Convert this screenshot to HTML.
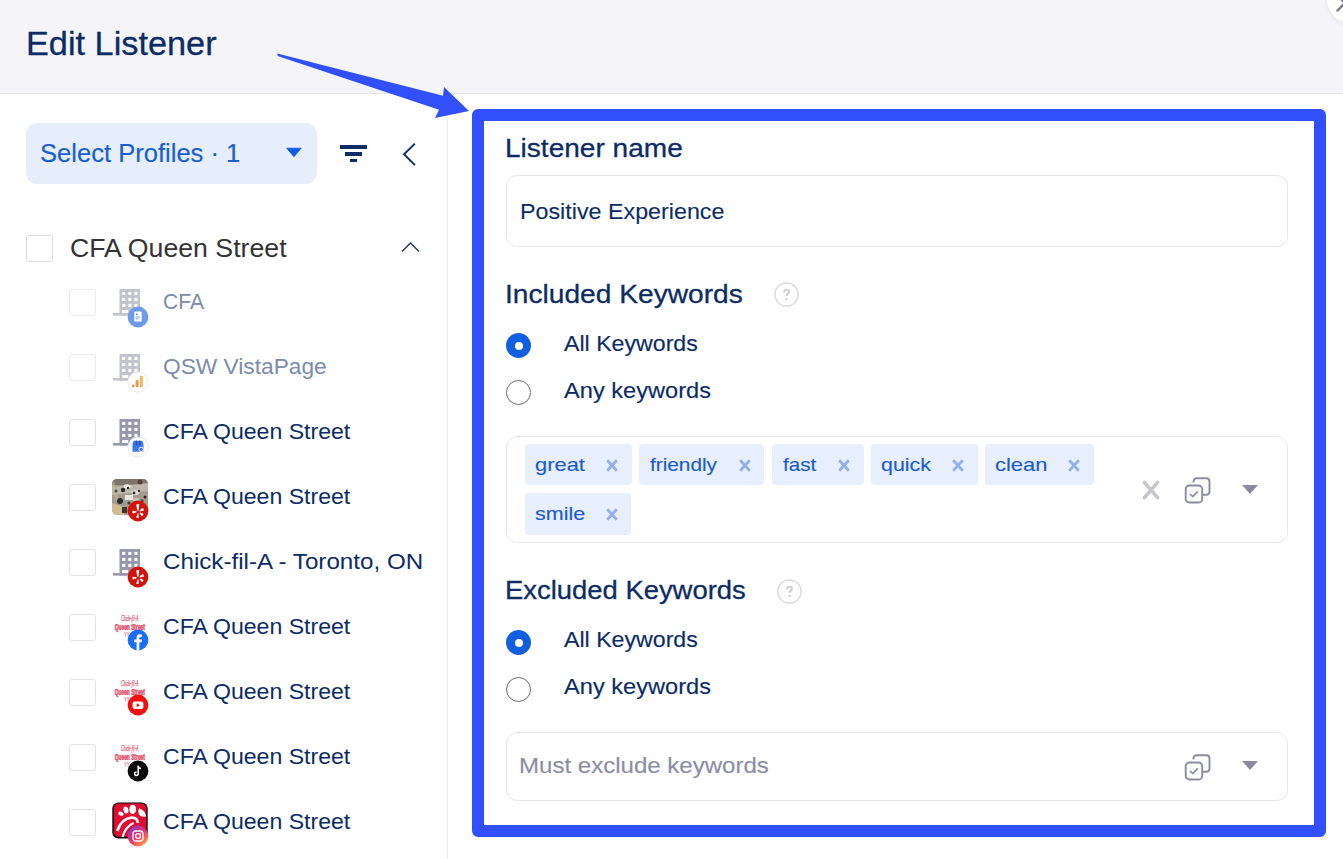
<!DOCTYPE html><html><head><meta charset="utf-8"><title>Edit Listener</title><style>
*{margin:0;padding:0;box-sizing:border-box}
html,body{width:1343px;height:859px;overflow:hidden;background:#fff;font-family:"Liberation Sans",sans-serif}
.t{position:absolute;white-space:nowrap;transform-origin:0 0;font-weight:400}
.ic{position:absolute;display:block}
.abs{position:absolute}
</style></head><body>
<div class="abs" style="left:0;top:0;width:1343px;height:93px;background:#f4f4f9"></div>
<div class="abs" style="left:0;top:93px;width:1343px;height:1px;background:#e6e6ec"></div>
<div class="abs" style="left:1327px;top:-25px;width:48px;height:48px;border-radius:50%;background:#fff;box-shadow:0 1px 8px rgba(30,30,60,0.07)"></div>
<svg class="ic" style="left:1330px;top:0" width="13" height="16" viewBox="0 0 13 16"><path d="M7.4 10.6 L15 3 M11 -1 L15 3" stroke="#7b7b8c" stroke-width="2.3" stroke-linecap="round" fill="none"/></svg>
<div class="abs" style="left:447px;top:94px;width:1px;height:765px;background:#ebebf0"></div>
<div class="abs" style="left:26px;top:123px;width:291px;height:61px;border-radius:11px;background:#e6eefb"></div>
<svg class="ic" style="left:285px;top:147px" width="18" height="11" viewBox="0 0 18 11"><path d="M1.6 1.2 H16.2 L9 9.7Z" fill="#0d5de4" stroke="#0d5de4" stroke-width="0.8" stroke-linejoin="round"/></svg>
<div class="abs" style="left:339.7px;top:145px;width:27.5px;height:3.8px;background:#0c2c66"></div>
<div class="abs" style="left:344.9px;top:152px;width:17px;height:3.5px;background:#0c2c66"></div>
<div class="abs" style="left:350px;top:159px;width:7px;height:3.3px;background:#0c2c66"></div>
<svg class="ic" style="left:398px;top:138px" width="24" height="32" viewBox="0 0 24 32"><path d="M16.9 5.6 L6 16.2 L16.9 27.2" fill="none" stroke="#0c2c66" stroke-width="1.9"/></svg>
<div class="abs" style="left:26px;top:235px;width:27px;height:27px;border:1px solid #dddde2;border-radius:3px"></div>
<svg class="ic" style="left:398px;top:236px" width="26" height="20" viewBox="0 0 26 20"><path d="M4 15.6 L12.5 7.1 L21 15.6" fill="none" stroke="#24375c" stroke-width="1.45"/></svg>
<div class="abs" style="left:69px;top:289px;width:27px;height:27px;border:1px solid #ececef;border-radius:3px"></div>
<svg class="ic" style="left:113px;top:289px" width="30" height="30" viewBox="0 0 30 30"><rect x="6.5" y="0" width="20.5" height="26.5" fill="#c3c3cd"/><rect x="0" y="24" width="14" height="2.6" fill="#c3c3cd"/><rect x="9.2" y="2.9" width="3.1" height="3.1" fill="#fff"/><rect x="15.3" y="2.9" width="3.1" height="3.1" fill="#fff"/><rect x="21.4" y="2.9" width="3.1" height="3.1" fill="#fff"/><rect x="9.2" y="8.9" width="3.1" height="3.1" fill="#fff"/><rect x="15.3" y="8.9" width="3.1" height="3.1" fill="#fff"/><rect x="21.4" y="8.9" width="3.1" height="3.1" fill="#fff"/><rect x="9.2" y="14.9" width="3.1" height="3.1" fill="#fff"/><rect x="15.3" y="14.9" width="3.1" height="3.1" fill="#fff"/><rect x="21.4" y="14.9" width="3.1" height="3.1" fill="#fff"/><rect x="9.2" y="21" width="6" height="3" fill="#fff"/></svg>
<svg class="ic" style="left:126.5px;top:305.9px" width="22" height="22" viewBox="0 0 22 22"><circle cx="11" cy="11" r="10.4" fill="#6c9ce9"/><rect x="7.3" y="5.6" width="7.4" height="10" rx="1.2" fill="#fff"/><circle cx="9.8" cy="8.2" r="1" fill="#6c9ce9"/><rect x="8.6" y="10.6" width="4.6" height="0.9" fill="#6c9ce9"/><rect x="8.6" y="12.4" width="3" height="0.9" fill="#6c9ce9"/></svg>
<div class="abs" style="left:69px;top:354px;width:27px;height:27px;border:1px solid #ececef;border-radius:3px"></div>
<svg class="ic" style="left:113px;top:354px" width="30" height="30" viewBox="0 0 30 30"><rect x="6.5" y="0" width="20.5" height="26.5" fill="#c3c3cd"/><rect x="0" y="24" width="14" height="2.6" fill="#c3c3cd"/><rect x="9.2" y="2.9" width="3.1" height="3.1" fill="#fff"/><rect x="15.3" y="2.9" width="3.1" height="3.1" fill="#fff"/><rect x="21.4" y="2.9" width="3.1" height="3.1" fill="#fff"/><rect x="9.2" y="8.9" width="3.1" height="3.1" fill="#fff"/><rect x="15.3" y="8.9" width="3.1" height="3.1" fill="#fff"/><rect x="21.4" y="8.9" width="3.1" height="3.1" fill="#fff"/><rect x="9.2" y="14.9" width="3.1" height="3.1" fill="#fff"/><rect x="15.3" y="14.9" width="3.1" height="3.1" fill="#fff"/><rect x="21.4" y="14.9" width="3.1" height="3.1" fill="#fff"/><rect x="9.2" y="21" width="6" height="3" fill="#fff"/></svg>
<svg class="ic" style="left:126.5px;top:370.9px" width="22" height="22" viewBox="0 0 22 22"><circle cx="11" cy="11" r="10.1" fill="#fff" stroke="#e4e4ea" stroke-width="0.8"/><rect x="12.7" y="4.7" width="3.2" height="11.5" rx="1.2" fill="#f4b860"/><rect x="8.6" y="9" width="3" height="7.2" rx="1.1" fill="#e39a52"/><circle cx="6.2" cy="15" r="1.4" fill="#e39a52"/></svg>
<div class="abs" style="left:69px;top:419px;width:27px;height:27px;border:1px solid #e2e2e6;border-radius:3px"></div>
<svg class="ic" style="left:113px;top:419px" width="30" height="30" viewBox="0 0 30 30"><rect x="6.5" y="0" width="20.5" height="26.5" fill="#9798ab"/><rect x="0" y="24" width="14" height="2.6" fill="#9798ab"/><rect x="9.2" y="2.9" width="3.1" height="3.1" fill="#fff"/><rect x="15.3" y="2.9" width="3.1" height="3.1" fill="#fff"/><rect x="21.4" y="2.9" width="3.1" height="3.1" fill="#fff"/><rect x="9.2" y="8.9" width="3.1" height="3.1" fill="#fff"/><rect x="15.3" y="8.9" width="3.1" height="3.1" fill="#fff"/><rect x="21.4" y="8.9" width="3.1" height="3.1" fill="#fff"/><rect x="9.2" y="14.9" width="3.1" height="3.1" fill="#fff"/><rect x="15.3" y="14.9" width="3.1" height="3.1" fill="#fff"/><rect x="21.4" y="14.9" width="3.1" height="3.1" fill="#fff"/><rect x="9.2" y="21" width="6" height="3" fill="#fff"/></svg>
<svg class="ic" style="left:126.5px;top:435.9px" width="22" height="22" viewBox="0 0 22 22"><circle cx="11" cy="11" r="10.1" fill="#fff" stroke="#e0dde8" stroke-width="0.8"/><path d="M5.5 8.6 L6.6 4.8 H15.4 L16.5 8.6 V15.8 H5.5 Z" fill="#3b78e7"/><path d="M8.6 4.8 h1.6 v4.2 h-1.6z M11.8 4.8 h1.6 v4.2 h-1.6z" fill="#1f4fb8"/><circle cx="14.2" cy="13.4" r="2.2" fill="none" stroke="#fff" stroke-width="0.9"/></svg>
<div class="abs" style="left:69px;top:484px;width:27px;height:27px;border:1px solid #e2e2e6;border-radius:3px"></div>
<svg class="ic" style="left:112px;top:479px" width="36" height="36" viewBox="0 0 36 36"><defs><clipPath id="phc"><rect x="0" y="0" width="36" height="36" rx="5"/></clipPath></defs><g clip-path="url(#phc)"><rect width="36" height="36" fill="#a49b8e"/><rect x="0" y="0" width="36" height="6" fill="#7d756b"/><path d="M0 8 L36 4 V12 L0 16Z" fill="#bdb6aa"/><path d="M12 6 q4 -2 8 1 q-3 4 -8 2z" fill="#f0eee8"/><path d="M19 12 q5 -2 9 1 q-2 4 -8 3z" fill="#e2ded6"/><circle cx="11" cy="11" r="2.2" fill="#2a2724"/><circle cx="16" cy="9" r="1.2" fill="#2a2724"/><circle cx="22" cy="14" r="1.4" fill="#2d2b28"/><circle cx="27" cy="12" r="1.2" fill="#3a3632"/><circle cx="8" cy="22" r="3" fill="#23302a"/><path d="M0 24 L12 28 V36 H0Z" fill="#d1bb90"/><path d="M2 2 L6 20 L4 22 L0 6Z" fill="#c9b58e" opacity="0.7"/><circle cx="28" cy="3" r="2.5" fill="#5b3e36"/><circle cx="4" cy="12" r="1.5" fill="#4a4640"/><rect x="13" y="16" width="8" height="5" fill="#e8e6df"/><rect x="21" y="19" width="6" height="3" fill="#c6c1b6"/><circle cx="17" cy="24" r="1.6" fill="#3a3935"/><circle cx="30" cy="22" r="1.8" fill="#53504a"/><rect x="10" y="28" width="5" height="6" fill="#39372f"/><circle cx="33" cy="18" r="1.5" fill="#2b2a27"/></g></svg>
<svg class="ic" style="left:126.5px;top:500.1px" width="22" height="22" viewBox="0 0 22 22"><circle cx="11" cy="11" r="10.4" fill="#d1130b"/><g fill="#fff"><path d="M9.2 4.6 Q10.6 3.4 12.2 4.2 L11.6 10.4 Q10.9 11.2 10.3 10.5 Z"/><path d="M12.6 10.2 L15.6 8.0 Q16.9 8.6 16.8 10.4 L13.2 11.6 Q12.3 11.2 12.6 10.2Z"/><path d="M13.2 12.6 L16.4 13.8 Q16.4 15.6 15.0 16.2 L12.6 13.4 Q12.7 12.6 13.2 12.6Z"/><path d="M11.4 13.6 L11.8 17.4 Q10.6 18.4 9.2 17.6 L10.6 13.4 Q11.2 13.1 11.4 13.6Z"/><path d="M9.6 12.2 L5.9 13.6 Q5.0 12.2 5.6 10.8 L9.4 11.2 Q9.9 11.7 9.6 12.2Z"/></g></svg>
<div class="abs" style="left:69px;top:549px;width:27px;height:27px;border:1px solid #e2e2e6;border-radius:3px"></div>
<svg class="ic" style="left:113px;top:549px" width="30" height="30" viewBox="0 0 30 30"><rect x="6.5" y="0" width="20.5" height="26.5" fill="#9798ab"/><rect x="0" y="24" width="14" height="2.6" fill="#9798ab"/><rect x="9.2" y="2.9" width="3.1" height="3.1" fill="#fff"/><rect x="15.3" y="2.9" width="3.1" height="3.1" fill="#fff"/><rect x="21.4" y="2.9" width="3.1" height="3.1" fill="#fff"/><rect x="9.2" y="8.9" width="3.1" height="3.1" fill="#fff"/><rect x="15.3" y="8.9" width="3.1" height="3.1" fill="#fff"/><rect x="21.4" y="8.9" width="3.1" height="3.1" fill="#fff"/><rect x="9.2" y="14.9" width="3.1" height="3.1" fill="#fff"/><rect x="15.3" y="14.9" width="3.1" height="3.1" fill="#fff"/><rect x="21.4" y="14.9" width="3.1" height="3.1" fill="#fff"/><rect x="9.2" y="21" width="6" height="3" fill="#fff"/></svg>
<svg class="ic" style="left:126.5px;top:565.9px" width="22" height="22" viewBox="0 0 22 22"><circle cx="11" cy="11" r="10.4" fill="#d1130b"/><g fill="#fff"><path d="M9.2 4.6 Q10.6 3.4 12.2 4.2 L11.6 10.4 Q10.9 11.2 10.3 10.5 Z"/><path d="M12.6 10.2 L15.6 8.0 Q16.9 8.6 16.8 10.4 L13.2 11.6 Q12.3 11.2 12.6 10.2Z"/><path d="M13.2 12.6 L16.4 13.8 Q16.4 15.6 15.0 16.2 L12.6 13.4 Q12.7 12.6 13.2 12.6Z"/><path d="M11.4 13.6 L11.8 17.4 Q10.6 18.4 9.2 17.6 L10.6 13.4 Q11.2 13.1 11.4 13.6Z"/><path d="M9.6 12.2 L5.9 13.6 Q5.0 12.2 5.6 10.8 L9.4 11.2 Q9.9 11.7 9.6 12.2Z"/></g></svg>
<div class="abs" style="left:69px;top:614px;width:27px;height:27px;border:1px solid #e2e2e6;border-radius:3px"></div>
<svg class="ic" style="left:110px;top:607px" width="40" height="36" viewBox="0 0 40 36"><text x="10.9" y="14.2" font-family="Liberation Serif" font-style="italic" font-size="9" textLength="17.5" lengthAdjust="spacingAndGlyphs" fill="#d9506c" stroke="#d9506c" stroke-width="0.25">Chick-fil-A</text><text x="4.7" y="22.8" font-family="Liberation Sans" font-weight="bold" font-size="8.6" textLength="30.2" lengthAdjust="spacingAndGlyphs" fill="#d83a58" stroke="#e06079" stroke-width="0.6">Queen Street</text><text x="14" y="29.6" font-family="Liberation Sans" font-weight="bold" font-size="7" textLength="5.6" lengthAdjust="spacingAndGlyphs" fill="#e88aa0">YY</text></svg>
<svg class="ic" style="left:126.5px;top:629.4px" width="22" height="22" viewBox="0 0 22 22"><circle cx="11" cy="11" r="10.4" fill="#1a6ef5"/><path d="M12.3 21.4 V13.3 H14.6 L15 10.6 H12.3 V9 Q12.3 7.9 13.5 7.9 H15.1 V5.5 Q14 5.3 12.9 5.3 Q9.6 5.3 9.6 8.7 V10.6 H7.3 V13.3 H9.6 V21.4 Z" fill="#fff"/></svg>
<div class="abs" style="left:69px;top:679px;width:27px;height:27px;border:1px solid #e2e2e6;border-radius:3px"></div>
<svg class="ic" style="left:110px;top:672px" width="40" height="36" viewBox="0 0 40 36"><text x="10.9" y="14.2" font-family="Liberation Serif" font-style="italic" font-size="9" textLength="17.5" lengthAdjust="spacingAndGlyphs" fill="#d9506c" stroke="#d9506c" stroke-width="0.25">Chick-fil-A</text><text x="4.7" y="22.8" font-family="Liberation Sans" font-weight="bold" font-size="8.6" textLength="30.2" lengthAdjust="spacingAndGlyphs" fill="#d83a58" stroke="#e06079" stroke-width="0.6">Queen Street</text><text x="14" y="29.6" font-family="Liberation Sans" font-weight="bold" font-size="7" textLength="5.6" lengthAdjust="spacingAndGlyphs" fill="#e88aa0">YY</text></svg>
<svg class="ic" style="left:126.5px;top:694.2px" width="22" height="22" viewBox="0 0 22 22"><circle cx="11" cy="11" r="10.4" fill="#f40f0f"/><rect x="5.6" y="7.4" width="10.8" height="7.6" rx="2" fill="#fff"/><path d="M9.7 9.2 L13 11.2 L9.7 13.2 Z" fill="#f40f0f"/></svg>
<div class="abs" style="left:69px;top:744px;width:27px;height:27px;border:1px solid #e2e2e6;border-radius:3px"></div>
<svg class="ic" style="left:110px;top:737px" width="40" height="36" viewBox="0 0 40 36"><text x="10.9" y="14.2" font-family="Liberation Serif" font-style="italic" font-size="9" textLength="17.5" lengthAdjust="spacingAndGlyphs" fill="#d9506c" stroke="#d9506c" stroke-width="0.25">Chick-fil-A</text><text x="4.7" y="22.8" font-family="Liberation Sans" font-weight="bold" font-size="8.6" textLength="30.2" lengthAdjust="spacingAndGlyphs" fill="#d83a58" stroke="#e06079" stroke-width="0.6">Queen Street</text><text x="14" y="29.6" font-family="Liberation Sans" font-weight="bold" font-size="7" textLength="5.6" lengthAdjust="spacingAndGlyphs" fill="#e88aa0">YY</text></svg>
<svg class="ic" style="left:126.5px;top:759.7px" width="22" height="22" viewBox="0 0 22 22"><circle cx="11" cy="11" r="10.4" fill="#0a0a0a"/><path d="M11.2 5.8 V13.6 Q11.2 15.6 9.4 15.6 Q7.6 15.6 7.6 13.8 Q7.6 12 9.6 12" fill="none" stroke="#fff" stroke-width="1.5"/><path d="M11.2 5.8 Q11.6 8.2 14 8.4" fill="none" stroke="#fff" stroke-width="1.5"/></svg>
<div class="abs" style="left:69px;top:809px;width:27px;height:27px;border:1px solid #e2e2e6;border-radius:3px"></div>
<svg class="ic" style="left:112px;top:802.4px" width="36" height="37" viewBox="0 0 36 37"><rect x="0.3" y="0.5" width="35.4" height="36" rx="6" fill="#0a0a0a"/><rect x="1.8" y="1.6" width="32.6" height="33.2" rx="5" fill="#e10a30"/><g fill="#fff"><ellipse cx="8.9" cy="11.8" rx="2.8" ry="2" transform="rotate(25 8.9 11.8)"/><ellipse cx="13.9" cy="8" rx="2.5" ry="3.6" transform="rotate(-12 13.9 8)"/><ellipse cx="20.7" cy="7.3" rx="3.3" ry="4.6"/><path d="M27 6.2 Q33.6 8.6 34 14.6 Q29 15.4 26.8 12.4 Q25.4 9.6 27 6.2Z"/></g><path d="M5.2 29 Q9.5 16.5 19.5 15.6 Q25.6 15.4 25.8 21" fill="none" stroke="#fff" stroke-width="2.6"/><path d="M10.6 35 Q13.5 24.5 21.5 21" fill="none" stroke="#fff" stroke-width="2.2"/></svg>
<svg class="ic" style="left:126.5px;top:824.6px" width="22" height="22" viewBox="0 0 22 22"><defs><linearGradient id="igg" x1="0.1" y1="0" x2="0.9" y2="1"><stop offset="0" stop-color="#7b3fd6"/><stop offset="0.5" stop-color="#e8306a"/><stop offset="1" stop-color="#ffb33c"/></linearGradient></defs><circle cx="11" cy="11" r="10.4" fill="url(#igg)"/><rect x="6" y="6" width="10" height="10" rx="2.8" fill="none" stroke="#fff" stroke-width="1.3"/><circle cx="11" cy="11" r="2.4" fill="none" stroke="#fff" stroke-width="1.3"/><circle cx="13.9" cy="8.1" r="0.6" fill="#fff"/></svg>
<div class="abs" style="left:472px;top:109px;width:854px;height:728px;border:12px solid #3150fb;border-radius:6px"></div>
<svg class="ic" style="left:0;top:0" width="480" height="130" viewBox="0 0 480 130"><path d="M277.3 53.6 L443 95.8 L444 87 L469 111 L435 118 L439 109.8 L277.6 55.9 Z" fill="#3150fb"/></svg>
<div class="abs" style="left:506px;top:175px;width:782px;height:72px;border:1px solid #e6e6eb;border-radius:11px"></div>
<svg class="ic" style="left:774.2px;top:281.9px" width="25" height="25" viewBox="0 0 25 25"><circle cx="12.5" cy="12.5" r="11.6" fill="none" stroke="#d9d9df" stroke-width="1.5"/><path d="M10.1 10.6 Q10.1 7.6 12.6 7.6 Q15 7.6 15 9.9 Q15 11.4 12.7 12.6 V14" fill="none" stroke="#cbcbd3" stroke-width="1.9"/><circle cx="12.6" cy="16.9" r="1.1" fill="#cbcbd3"/></svg>
<svg class="ic" style="left:776.9px;top:578.8px" width="25" height="25" viewBox="0 0 25 25"><circle cx="12.5" cy="12.5" r="11.6" fill="none" stroke="#d9d9df" stroke-width="1.5"/><path d="M10.1 10.6 Q10.1 7.6 12.6 7.6 Q15 7.6 15 9.9 Q15 11.4 12.7 12.6 V14" fill="none" stroke="#cbcbd3" stroke-width="1.9"/><circle cx="12.6" cy="16.9" r="1.1" fill="#cbcbd3"/></svg>
<div class="abs" style="left:506.1px;top:333.4px;width:25px;height:25px;border-radius:50%;background:#0f5fe0"></div>
<div class="abs" style="left:514.6px;top:342.0px;width:8px;height:8px;border-radius:50%;background:#fff"></div>
<div class="abs" style="left:506.1px;top:380.0px;width:25px;height:25px;border-radius:50%;border:1.2px solid #6c6c78"></div>
<div class="abs" style="left:506.1px;top:630.2px;width:25px;height:25px;border-radius:50%;background:#0f5fe0"></div>
<div class="abs" style="left:514.6px;top:638.8px;width:8px;height:8px;border-radius:50%;background:#fff"></div>
<div class="abs" style="left:506.1px;top:676.8px;width:25px;height:25px;border-radius:50%;border:1.2px solid #6c6c78"></div>
<div class="abs" style="left:506px;top:436px;width:782px;height:107px;border:1px solid #e6e6eb;border-radius:11px"></div>
<div class="abs" style="left:525.3px;top:444.1px;width:106.6px;height:41.4px;border-radius:4px;background:#e8effc"></div>
<svg class="ic" style="left:605.1px;top:458.1px" width="14" height="15" viewBox="0 0 14 15"><path d="M2.2 2.2 L11.8 12.8 M11.8 2.2 L2.2 12.8" stroke="#94b0ea" stroke-width="2.8" fill="none"/></svg>
<div class="abs" style="left:639.3px;top:444.1px;width:124.4px;height:41.4px;border-radius:4px;background:#e8effc"></div>
<svg class="ic" style="left:737.9px;top:458.1px" width="14" height="15" viewBox="0 0 14 15"><path d="M2.2 2.2 L11.8 12.8 M11.8 2.2 L2.2 12.8" stroke="#94b0ea" stroke-width="2.8" fill="none"/></svg>
<div class="abs" style="left:772.0px;top:444.1px;width:91.6px;height:41.4px;border-radius:4px;background:#e8effc"></div>
<svg class="ic" style="left:836.6px;top:458.1px" width="14" height="15" viewBox="0 0 14 15"><path d="M2.2 2.2 L11.8 12.8 M11.8 2.2 L2.2 12.8" stroke="#94b0ea" stroke-width="2.8" fill="none"/></svg>
<div class="abs" style="left:871.2px;top:444.1px;width:106.4px;height:41.4px;border-radius:4px;background:#e8effc"></div>
<svg class="ic" style="left:950.8px;top:458.1px" width="14" height="15" viewBox="0 0 14 15"><path d="M2.2 2.2 L11.8 12.8 M11.8 2.2 L2.2 12.8" stroke="#94b0ea" stroke-width="2.8" fill="none"/></svg>
<div class="abs" style="left:985.3px;top:444.1px;width:108.3px;height:41.4px;border-radius:4px;background:#e8effc"></div>
<svg class="ic" style="left:1066.6px;top:458.1px" width="14" height="15" viewBox="0 0 14 15"><path d="M2.2 2.2 L11.8 12.8 M11.8 2.2 L2.2 12.8" stroke="#94b0ea" stroke-width="2.8" fill="none"/></svg>
<div class="abs" style="left:525.3px;top:493.3px;width:105.5px;height:41.4px;border-radius:4px;background:#e8effc"></div>
<svg class="ic" style="left:604.7px;top:507.3px" width="14" height="15" viewBox="0 0 14 15"><path d="M2.2 2.2 L11.8 12.8 M11.8 2.2 L2.2 12.8" stroke="#94b0ea" stroke-width="2.8" fill="none"/></svg>
<svg class="ic" style="left:1141px;top:479px" width="20" height="22" viewBox="0 0 20 22"><path d="M3.4 3.4 L16.6 18.6 M16.6 3.4 L3.4 18.6" stroke="#c6c6cc" stroke-width="3.7" stroke-linecap="round" fill="none"/></svg>
<svg class="ic" style="left:1183.5px;top:476.5px" width="28" height="28" viewBox="0 0 28 28"><path d="M9.5 5.5 V4.5 Q9.5 1.3 12.7 1.3 H22.3 Q25.5 1.3 25.5 4.5 V14.6 Q25.5 17.8 22.3 17.8 H19" fill="none" stroke="#8a8b9f" stroke-width="1.9"/><rect x="1.7" y="8.5" width="16.5" height="17" rx="3.6" fill="#fff" stroke="#8a8b9f" stroke-width="1.9"/><path d="M6 17 L8.8 19.6 L13.8 14.4" fill="none" stroke="#8a8b9f" stroke-width="1.7"/></svg>
<svg class="ic" style="left:1241px;top:484px" width="18" height="11" viewBox="0 0 18 11"><path d="M1 1 H17 L9 10Z" fill="#8a8ba0"/></svg>
<div class="abs" style="left:506px;top:732px;width:782px;height:69px;border:1px solid #e6e6eb;border-radius:11px"></div>
<svg class="ic" style="left:1183.5px;top:753.5px" width="28" height="28" viewBox="0 0 28 28"><path d="M9.5 5.5 V4.5 Q9.5 1.3 12.7 1.3 H22.3 Q25.5 1.3 25.5 4.5 V14.6 Q25.5 17.8 22.3 17.8 H19" fill="none" stroke="#8a8b9f" stroke-width="1.9"/><rect x="1.7" y="8.5" width="16.5" height="17" rx="3.6" fill="#fff" stroke="#8a8b9f" stroke-width="1.9"/><path d="M6 17 L8.8 19.6 L13.8 14.4" fill="none" stroke="#8a8b9f" stroke-width="1.7"/></svg>
<svg class="ic" style="left:1241px;top:760px" width="18" height="11" viewBox="0 0 18 11"><path d="M1 1 H17 L9 10Z" fill="#8a8ba0"/></svg>
<div class="t" id="title" style="-webkit-text-stroke:0.3px #0c2c66;left:25.80px;top:19.30px;font-size:33.30px;line-height:50px;letter-spacing:0.000px;color:#0c2c66;transform:scaleX(1.0297)">Edit Listener</div>
<div class="t" id="selp" style="-webkit-text-stroke:0.2px #1a5fd0;left:39.60px;top:133.30px;font-size:26.40px;line-height:40px;letter-spacing:0.000px;color:#1a5fd0;transform:scaleX(0.9686)">Select Profiles · 1</div>
<div class="t" id="grp" style="left:69.60px;top:228.50px;font-size:26.20px;line-height:39px;letter-spacing:0.000px;color:#333333;transform:scaleX(1.0190)">CFA Queen Street</div>
<div class="t" id="lname" style="-webkit-text-stroke:0.3px #0c2c66;left:505.20px;top:129.40px;font-size:26.20px;line-height:39px;letter-spacing:0.000px;color:#0c2c66;transform:scaleX(1.0712)">Listener name</div>
<div class="t" id="posexp" style="-webkit-text-stroke:0.1px #0c2c66;left:520.00px;top:194.90px;font-size:22.00px;line-height:33px;letter-spacing:0.000px;color:#0c2c66;transform:scaleX(1.0580)">Positive Experience</div>
<div class="t" id="inckw" style="-webkit-text-stroke:0.3px #0c2c66;left:504.80px;top:275.40px;font-size:26.00px;line-height:39px;letter-spacing:0.000px;color:#0c2c66;transform:scaleX(1.0825)">Included Keywords</div>
<div class="t" id="allkw1" style="-webkit-text-stroke:0.15px #0c2c66;left:564.20px;top:327.00px;font-size:22.00px;line-height:33px;letter-spacing:0.000px;color:#0c2c66;transform:scaleX(1.0524)">All Keywords</div>
<div class="t" id="anykw1" style="-webkit-text-stroke:0.15px #0c2c66;left:564.20px;top:373.70px;font-size:22.00px;line-height:33px;letter-spacing:0.000px;color:#0c2c66;transform:scaleX(1.0736)">Any keywords</div>
<div class="t" id="exckw" style="-webkit-text-stroke:0.3px #0c2c66;left:504.80px;top:571.40px;font-size:26.00px;line-height:39px;letter-spacing:0.000px;color:#0c2c66;transform:scaleX(1.0543)">Excluded Keywords</div>
<div class="t" id="allkw2" style="-webkit-text-stroke:0.15px #0c2c66;left:564.20px;top:623.20px;font-size:22.00px;line-height:33px;letter-spacing:0.000px;color:#0c2c66;transform:scaleX(1.0524)">All Keywords</div>
<div class="t" id="anykw2" style="-webkit-text-stroke:0.15px #0c2c66;left:564.20px;top:669.80px;font-size:22.00px;line-height:33px;letter-spacing:0.000px;color:#0c2c66;transform:scaleX(1.0736)">Any keywords</div>
<div class="t" id="mustex" style="-webkit-text-stroke:0.15px #8b8da4;left:519.40px;top:749.20px;font-size:22.00px;line-height:33px;letter-spacing:0.000px;color:#8b8da4;transform:scaleX(1.0929)">Must exclude keywords</div>
<div class="t" id="row0" style="left:162.80px;top:285.20px;font-size:22.00px;line-height:33px;letter-spacing:0.000px;color:#7b8bab;transform:scaleX(0.9579)">CFA</div>
<div class="t" id="row1" style="left:162.80px;top:350.20px;font-size:22.00px;line-height:33px;letter-spacing:0.000px;color:#7b8bab;transform:scaleX(1.0324)">QSW VistaPage</div>
<div class="t" id="row2" style="left:162.80px;top:415.20px;font-size:22.00px;line-height:33px;letter-spacing:0.000px;color:#0c2c66;transform:scaleX(1.0486)">CFA Queen Street</div>
<div class="t" id="row3" style="left:162.80px;top:480.20px;font-size:22.00px;line-height:33px;letter-spacing:0.000px;color:#0c2c66;transform:scaleX(1.0486)">CFA Queen Street</div>
<div class="t" id="row4" style="left:162.80px;top:545.20px;font-size:22.00px;line-height:33px;letter-spacing:0.000px;color:#0c2c66;transform:scaleX(1.0988)">Chick-fil-A - Toronto, ON</div>
<div class="t" id="row5" style="left:162.80px;top:610.20px;font-size:22.00px;line-height:33px;letter-spacing:0.000px;color:#0c2c66;transform:scaleX(1.0486)">CFA Queen Street</div>
<div class="t" id="row6" style="left:162.80px;top:675.20px;font-size:22.00px;line-height:33px;letter-spacing:0.000px;color:#0c2c66;transform:scaleX(1.0486)">CFA Queen Street</div>
<div class="t" id="row7" style="left:162.80px;top:740.20px;font-size:22.00px;line-height:33px;letter-spacing:0.000px;color:#0c2c66;transform:scaleX(1.0486)">CFA Queen Street</div>
<div class="t" id="row8" style="left:162.80px;top:805.20px;font-size:22.00px;line-height:33px;letter-spacing:0.000px;color:#0c2c66;transform:scaleX(1.0486)">CFA Queen Street</div>
<div class="t" id="tag_great" style="-webkit-text-stroke:0.15px #1a5ccf;left:535.40px;top:450.50px;font-size:19.00px;line-height:28px;letter-spacing:0.000px;color:#1a5ccf;transform:scaleX(1.1531)">great</div>
<div class="t" id="tag_friendly" style="-webkit-text-stroke:0.15px #1a5ccf;left:650.40px;top:450.50px;font-size:19.00px;line-height:28px;letter-spacing:0.000px;color:#1a5ccf;transform:scaleX(1.0938)">friendly</div>
<div class="t" id="tag_fast" style="-webkit-text-stroke:0.15px #1a5ccf;left:782.80px;top:450.50px;font-size:19.00px;line-height:28px;letter-spacing:0.000px;color:#1a5ccf;transform:scaleX(1.0808)">fast</div>
<div class="t" id="tag_quick" style="-webkit-text-stroke:0.15px #1a5ccf;left:881.20px;top:450.50px;font-size:19.00px;line-height:28px;letter-spacing:0.000px;color:#1a5ccf;transform:scaleX(1.1263)">quick</div>
<div class="t" id="tag_clean" style="-webkit-text-stroke:0.15px #1a5ccf;left:995.40px;top:450.50px;font-size:19.00px;line-height:28px;letter-spacing:0.000px;color:#1a5ccf;transform:scaleX(1.1537)">clean</div>
<div class="t" id="tag_smile" style="-webkit-text-stroke:0.15px #1a5ccf;left:535.40px;top:499.70px;font-size:19.00px;line-height:28px;letter-spacing:0.000px;color:#1a5ccf;transform:scaleX(1.1308)">smile</div>
</body></html>
